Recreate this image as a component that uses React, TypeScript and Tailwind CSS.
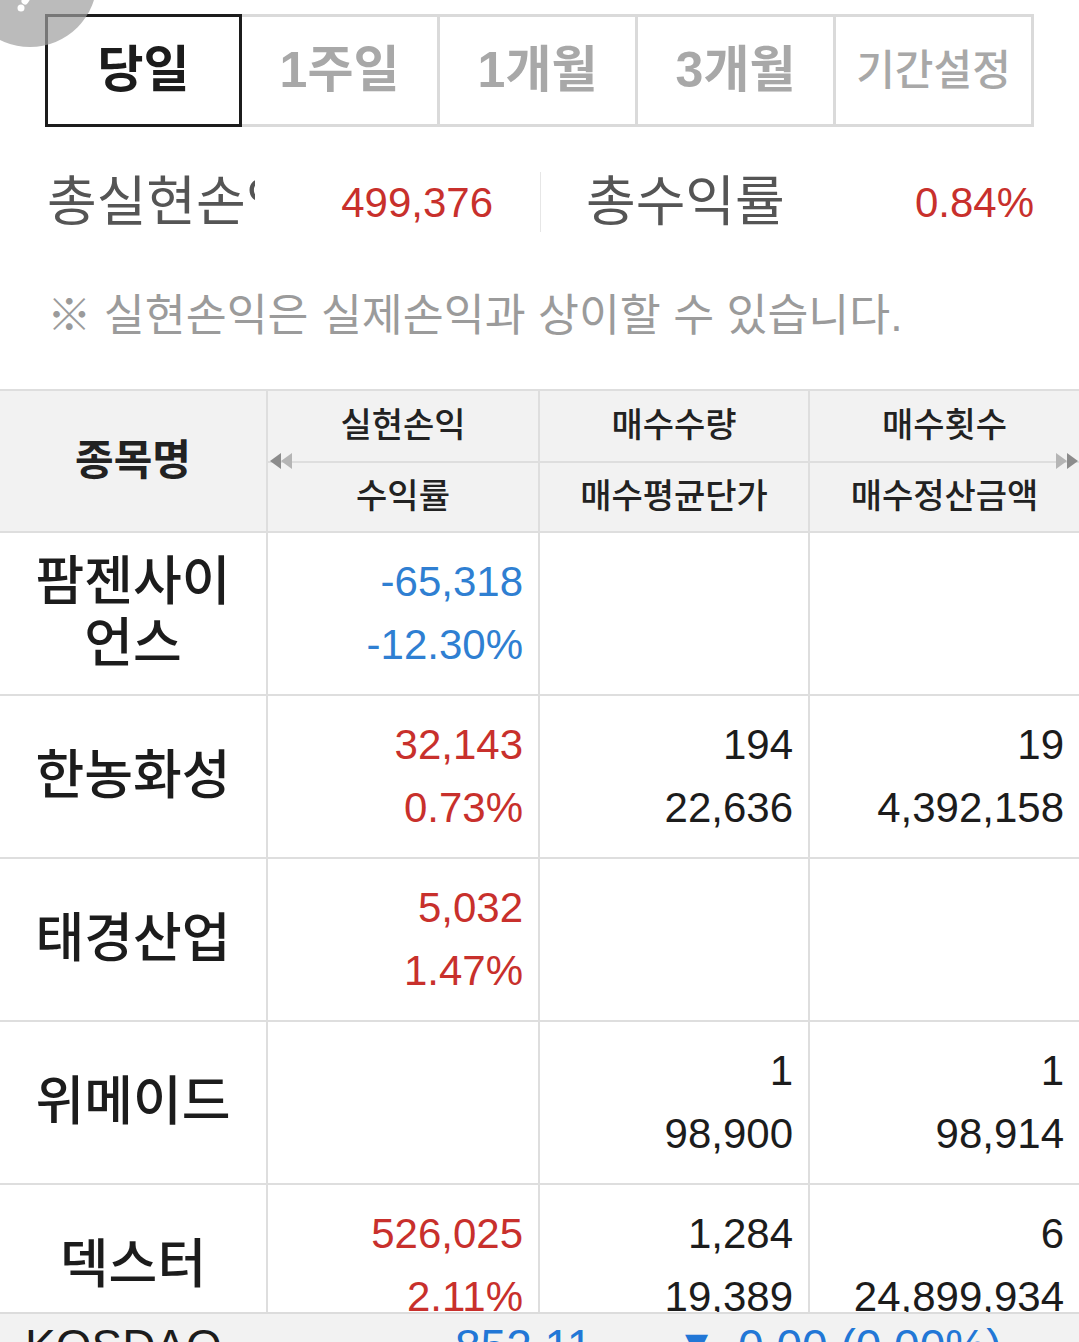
import React from "react";

const RED = "text-[#c8302c]";
const BLUE = "text-[#2f7fd2]";

interface Row {
  name: string[];
  pl?: [string, string];
  tone?: "red" | "blue";
  qty?: [string, string];
  cnt?: [string, string];
}

const ROWS: Row[] = [
  { name: ["팜젠사이", "언스"], pl: ["-65,318", "-12.30%"], tone: "blue" },
  { name: ["한농화성"], pl: ["32,143", "0.73%"], tone: "red", qty: ["194", "22,636"], cnt: ["19", "4,392,158"] },
  { name: ["태경산업"], pl: ["5,032", "1.47%"], tone: "red" },
  { name: ["위메이드"], qty: ["1", "98,900"], cnt: ["1", "98,914"] },
  { name: ["덱스터"], pl: ["526,025", "2.11%"], tone: "red", qty: ["1,284", "19,389"], cnt: ["6", "24,899,934"] },
];

const TABS = ["당일", "1주일", "1개월", "3개월", "기간설정"];

function NumCell({ vals, color, last }: { vals?: [string, string]; color: string; last?: boolean }) {
  return (
    <div className={`flex flex-col justify-center items-end pr-[15px] border-b-2 border-[#dedede] ${last ? "" : "border-r-2"} ${color}`}>
      {vals && (
        <>
          <div className="text-[42px] leading-[63px]">{vals[0]}</div>
          <div className="text-[42px] leading-[63px]">{vals[1]}</div>
        </>
      )}
    </div>
  );
}

export default function App() {
  return (
    <div className="relative w-[1079px] h-[1342px] overflow-hidden bg-white font-['Liberation_Sans','Noto_Sans_CJK_KR',sans-serif]">
      {/* period tabs */}
      <div className="flex ml-[45px] mt-[14px] w-[989px] h-[113px]">
        {TABS.map((t, i) =>
          i === 0 ? (
            <div key={t} className="w-[197px] flex items-center justify-center border-[3px] border-[#1c1c1c] text-[50px] font-bold text-[#1c1c1c]">
              {t}
            </div>
          ) : (
            <div
              key={t}
              className={`flex-1 flex items-center justify-center border-y-[3px] border-r-[3px] border-[#dadada] text-[#a8a8a8] ${i === 4 ? "text-[42px] font-medium" : "text-[50px] font-bold"}`}
            >
              {t}
            </div>
          )
        )}
      </div>

      {/* summary */}
      <div className="flex items-center h-[70px] mt-[40px]">
        <div className="w-[540px] flex items-center pl-[47px] pr-[47px]">
          <div className="w-[208px] overflow-hidden whitespace-nowrap text-[54px] text-[#555] leading-none">총실현손익</div>
          <div className={`flex-1 text-right text-[42px] ${RED}`}>499,376</div>
        </div>
        <div className="w-px h-[60px] bg-[#e6e6e6]" />
        <div className="flex-1 flex items-center pl-[45px] pr-[45px]">
          <div className="text-[54px] text-[#555] leading-none">총수익률</div>
          <div className={`flex-1 text-right text-[42px] ${RED}`}>0.84%</div>
        </div>
      </div>

      <div className="pl-[47px] mt-[57px] text-[44.5px] text-[#9b9b9b] leading-none whitespace-nowrap">
        ※ 실현손익은 실제손익과 상이할 수 있습니다.
      </div>

      {/* table */}
      <div className="mt-[50px] border-t-2 border-[#dedede] grid grid-cols-[268px_272px_270px_269px]">
        {/* header */}
        <div className="row-span-2 h-[142px] bg-[#f2f2f2] border-r-2 border-b-2 border-[#dedede] flex items-center justify-center text-[42px] font-bold text-[#222]">
          종목명
        </div>
        <div className="h-[72px] bg-[#f2f2f2] border-r-2 border-b-2 border-[#dedede] flex items-center justify-center text-[34px] font-medium text-[#222]">
          실현손익
        </div>
        <div className="h-[72px] bg-[#f2f2f2] border-r-2 border-b-2 border-[#dedede] flex items-center justify-center text-[34px] font-medium text-[#222]">
          매수수량
        </div>
        <div className="h-[72px] bg-[#f2f2f2] border-b-2 border-[#dedede] flex items-center justify-center text-[34px] font-medium text-[#222]">
          매수횟수
        </div>
        <div className="relative h-[70px] bg-[#f2f2f2] border-r-2 border-b-2 border-[#dedede] flex items-center justify-center text-[34px] font-medium text-[#222]">
          수익률
          <svg className="absolute left-[2px] -top-[12px]" width="26" height="20" viewBox="0 0 26 20">
            <polygon points="0,10 11,2 11,18" fill="#8c8c8c" />
            <polygon points="11,10 22,2 22,18" fill="#b5b5b5" />
          </svg>
        </div>
        <div className="h-[70px] bg-[#f2f2f2] border-r-2 border-b-2 border-[#dedede] flex items-center justify-center text-[34px] font-medium text-[#222]">
          매수평균단가
        </div>
        <div className="relative h-[70px] bg-[#f2f2f2] border-b-2 border-[#dedede] flex items-center justify-center text-[34px] font-medium text-[#222]">
          매수정산금액
          <svg className="absolute right-0 -top-[12px]" width="26" height="20" viewBox="0 0 26 20">
            <polygon points="3,2 14,10 3,18" fill="#b5b5b5" />
            <polygon points="14,2 25,10 14,18" fill="#8c8c8c" />
          </svg>
        </div>

        {/* rows */}
        {ROWS.map((r) => {
          const tone = r.tone === "blue" ? BLUE : RED;
          return (
            <React.Fragment key={r.name.join("")}>
              <div className="h-[163px] border-r-2 border-b-2 border-[#dedede] flex flex-col items-center justify-center text-[53px] font-medium text-[#1c1c1c] leading-[62px]">
                {r.name.map((n) => (
                  <div key={n}>{n}</div>
                ))}
              </div>
              <NumCell vals={r.pl} color={tone} />
              <NumCell vals={r.qty} color="text-[#1c1c1c]" />
              <NumCell vals={r.cnt} color="text-[#1c1c1c]" last />
            </React.Fragment>
          );
        })}
      </div>

      {/* index ticker bar */}
      <div className="absolute left-0 right-0 top-[1312px] h-[80px] bg-[#f2f2f2] border-t-2 border-[#dcdcdc] flex items-start pt-[9px] text-[46px] leading-none">
        <div className="pl-[25px] w-[440px] text-[#1c1c1c]">KOSDAQ</div>
        <div className="text-[#2277d6] w-[245px] pl-[15px]">852.11</div>
        <div className="flex items-start text-[#2277d6]">
          <span className="text-[30px] leading-none mt-[6px] mr-[30px] font-['DejaVu_Sans',sans-serif]">▼</span>
          <span>0.00 (0.00%)</span>
        </div>
      </div>

      {/* floating button */}
      <div className="absolute -left-[37px] -top-[87px] w-[134px] h-[134px] rounded-full bg-[#9e9e9e]/70 flex items-end justify-center pb-[34px]">
        <svg width="30" height="40" viewBox="0 0 30 40">
          <path d="M26 2 L10 28" stroke="white" strokeWidth="7" strokeLinecap="round" />
          <circle cx="6" cy="35" r="3.5" fill="white" />
        </svg>
      </div>
    </div>
  );
}
